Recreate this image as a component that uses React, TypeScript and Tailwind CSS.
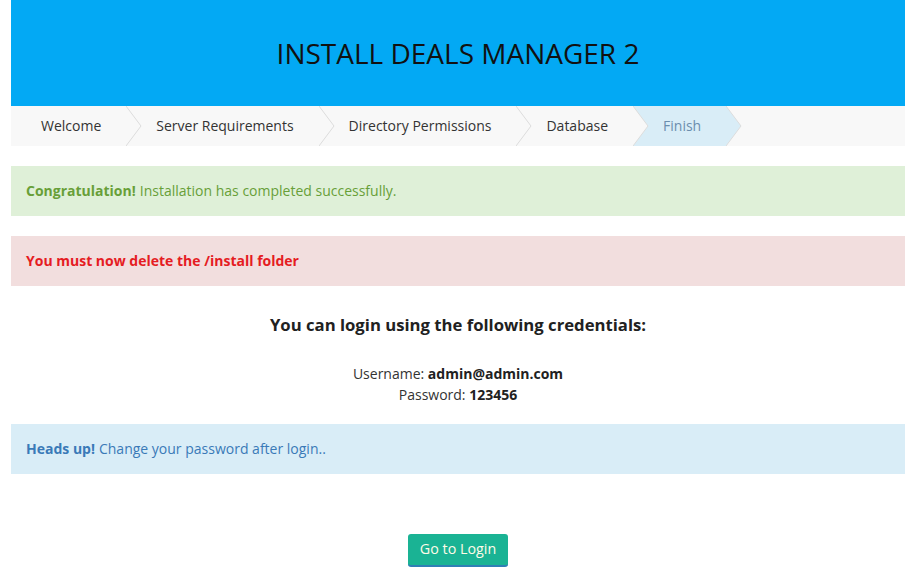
import React from 'react';

const steps = ['Welcome', 'Server Requirements', 'Directory Permissions', 'Database', 'Finish'];

function Step({ label, active }: { label: string; active: boolean }) {
  const fill = active ? '#d9edf7' : '#f8f8f8';
  return (
    <div
      className={`relative h-10 pl-[30px] pr-[25px] leading-10 ${
        active ? 'bg-[#d9edf7] text-[#6b8eae]' : 'text-[#333]'
      }`}
    >
      {label}
      {/* chevron */}
      <svg className="absolute top-0 left-full z-10" width="16" height="40" viewBox="0 0 16 40">
        <polygon points="0,0 15,20 0,40" fill={fill} />
        <polyline points="0,0 15,20 0,40" fill="none" stroke="#dcdcdc" strokeWidth="1" />
      </svg>
    </div>
  );
}

export default function App() {
  return (
    <div className="min-h-[574px] bg-white font-['Open_Sans',sans-serif] text-sm text-[#333]">
      <div className="mx-[11px]">
        {/* Header */}
        <div className="flex h-[106px] items-center justify-center bg-[#03a9f4]">
          <h1 className="text-[28px] font-normal text-[#111]">INSTALL DEALS MANAGER 2</h1>
        </div>

        {/* Steps */}
        <div className="flex h-10 bg-[#f8f8f8]">
          {steps.map((s) => (
            <Step key={s} label={s} active={s === 'Finish'} />
          ))}
        </div>

        <div className="mt-5 flex h-[50px] items-center bg-[#dff0d8] px-[15px] text-[#689f38]">
          <span className="mr-1 font-bold">Congratulation!</span> Installation has completed successfully.
        </div>

        <div className="mt-5 flex h-[50px] items-center bg-[#f2dede] px-[15px] font-bold text-[#e51c23]">
          You must now delete the /install folder
        </div>

        <h4 className="mt-[27px] text-center text-[16.7px] leading-6 font-bold text-[#212121]">
          You can login using the following credentials:
        </h4>

        <div className="mt-[26px] text-center leading-[21px] text-[#333]">
          <div>
            Username: <b className="text-[#212121]">admin@admin.com</b>
          </div>
          <div>
            Password: <b className="text-[#212121]">123456</b>
          </div>
        </div>

        <div className="mt-[19px] flex h-[50px] items-center bg-[#d9edf7] px-[15px] text-[#3a7ab8]">
          <span className="mr-1 font-bold">Heads up!</span> Change your password after login..
        </div>

        <div className="mt-[60px] flex justify-center">
          <button className="h-[33px] rounded-[3px] border-b-2 border-[#2f7fb5] bg-[#1ab394] px-[12px] text-[14.3px] text-[#fffbe8]">
            Go to Login
          </button>
        </div>
      </div>
    </div>
  );
}
